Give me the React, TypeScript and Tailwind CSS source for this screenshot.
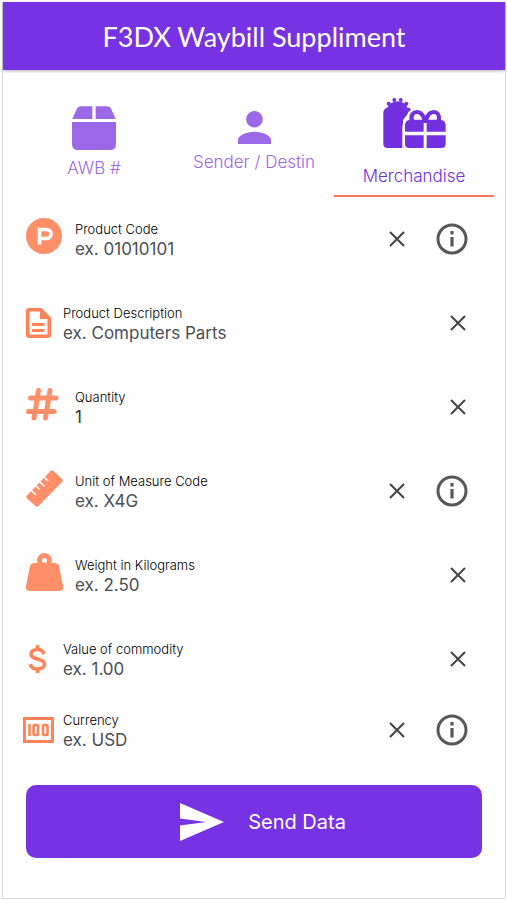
import { useState, type ReactNode } from "react";

function PackageIcon() {
  return (
    <svg className="h-11 w-11" viewBox="0 0 132 132" fill="currentColor" aria-hidden="true">
      <path d="M28 1h33v38H1L14 10Q18 1 28 1Z" />
      <path d="M71 1h33q10 0 14 9l13 29H71Z" />
      <path d="M0 48h132v66q0 18-18 18H18q-18 0-18-18Z" />
    </svg>
  );
}

function PersonIcon() {
  return (
    <svg className="h-[33px] w-[33px]" viewBox="4 4 16 16" fill="currentColor" aria-hidden="true">
      <path d="M12 12c2.21 0 4-1.79 4-4s-1.79-4-4-4-4 1.790-4 4 1.790 4 4 4zm0 2c-2.670 0-8 1.340-8 4v2h16v-2c0-2.660-5.330-4-8-4z" />
    </svg>
  );
}

function GiftsIcon() {
  return (
    <svg className="h-[52px] w-16" viewBox="187 37 192 156" aria-hidden="true">
      <g fill="currentColor">
        <path d="M204 65q6-16 30-18 24 2 30 20 5 10-2 20l-12 16v84h-46q-13 0-13-13V81q0-10 13-16Z" />
        <circle cx="207" cy="54" r="6" />
        <circle cx="224" cy="43" r="6" />
        <circle cx="243" cy="43" r="6" />
        <circle cx="260" cy="54" r="6" />
        <circle cx="267" cy="72" r="6" />
      </g>
      <path
        d="M248 192v-68q0-18 16-25 0-31 28-32 17 0 25 13 8-13 25-13 26 1 28 32"
        fill="white"
      />
      <g fill="currentColor">
        <path d="M256 138v-19q0-14 13-16 -2-29 23-30 17 0 25 18 8-18 25-18 24 1 22 30 14 2 14 16v19h-57v-26h-9v26Z" />
        <path d="M256 149h56v38h-43q-13 0-13-13ZM321 149h57v25q0 13-13 13h-44Z" />
      </g>
      <g fill="white">
        <path d="M283 102q-4-15 8-17 12 0 17 17Z" />
        <path d="M351 102q4-15-8-17-12 0-17 17Z" />
      </g>
    </svg>
  );
}

function CodeIcon() {
  return (
    <svg className="h-[37px] w-[37px]" viewBox="0 0 37 37" aria-hidden="true">
      <circle cx="18" cy="18" r="18" fill="currentColor" />
      <path
        d="M13.500 26.500V11.500h7a4.500 4.500 0 0 1 0 9h-6.500"
        fill="none"
        stroke="white"
        strokeWidth="3.600"
      />
    </svg>
  );
}

function DocumentIcon() {
  return (
    <svg className="h-8 w-[25px]" viewBox="0 0 25 32" aria-hidden="true">
      <path
        fill="currentColor"
        fillRule="evenodd"
        d="M3 1h12.500L25 10.500V28q0 3-3 3H3q-3 0-3-3V4q0-3 3-3Zm.500 3.500v23h18V12H14V4.500Z"
      />
      <path d="M6 17.500h12.500M6 23.500h12.500" stroke="currentColor" strokeWidth="3" />
    </svg>
  );
}

function HashIcon() {
  return (
    <svg className="h-[33px] w-[37px]" viewBox="0 0 37 33" aria-hidden="true">
      <path
        d="M12.500 2.500 8 30M24 2.500 19.500 30M4.500 10H30M2.500 23.500H28"
        fill="none"
        stroke="currentColor"
        strokeWidth="5"
        strokeLinecap="round"
      />
    </svg>
  );
}

function RulerIcon() {
  return (
    <svg className="h-[37px] w-[37px]" viewBox="0 0 37 37" aria-hidden="true">
      <path
        d="M1 25.500 24.500 1q1.500-1.500 3 0L36 9q1.500 1.500 0 3L12.500 36q-1.500 1.500-3 0L1 28.500q-1.500-1.500 0-3Z"
        fill="currentColor"
      />
      <path
        d="m5.500 20.500 4.500 4.500M10 16l3.500 3.500M14 12l4.500 4.500M18.500 7.500 22 11"
        stroke="white"
        strokeWidth="1.700"
      />
    </svg>
  );
}

function WeightIcon() {
  return (
    <svg className="h-[38px] w-[37px]" viewBox="0 0 37 38" aria-hidden="true">
      <path
        d="M8 10h21q3 0 4 3l4 20q1 5-4 5H4q-5 0-4-5l4-20q1-3 4-3Z"
        fill="currentColor"
      />
      <circle cx="18.500" cy="7.500" r="5" fill="white" stroke="currentColor" strokeWidth="5" />
    </svg>
  );
}

function DollarIcon() {
  return (
    <svg className="h-[30px] w-[25px]" viewBox="0 0 25 30" aria-hidden="true">
      <path
        d="M11.500 1v4M11.500 25v4M18 10c-1-3-3.500-4.500-6.500-4.500-4 0-6.500 2-6.500 4.500 0 3 3 4.200 6.500 5s7 2 7 5c0 3-3 5-7 5-3.500 0-6.500-1.700-7.300-4.800"
        fill="none"
        stroke="currentColor"
        strokeWidth="3.600"
      />
    </svg>
  );
}

function BanknoteIcon() {
  return (
    <svg
      className="h-[26px] w-[31px] shrink-0"
      viewBox="0 0 31 26"
      fill="none"
      stroke="currentColor"
      aria-hidden="true"
    >
      <path d="M1.500 1.500h28v23h-28Z" strokeWidth="3" />
      <path d="M6.500 7v12" strokeWidth="2.500" />
      <rect x="10.500" y="8" width="4.500" height="10" rx="1" strokeWidth="2.500" />
      <rect x="20" y="8" width="4.500" height="10" rx="1" strokeWidth="2.500" />
    </svg>
  );
}

function SendIcon() {
  return (
    <svg className="h-[38px] w-11" viewBox="0 0 44 38" fill="currentColor" aria-hidden="true">
      <path d="M0 0 44 19 0 38V22.500L26 19 0 15.500Z" />
    </svg>
  );
}

function ClearButton({ label, onClick }: { label: string; onClick: () => void }) {
  return (
    <button
      type="button"
      aria-label={`Clear ${label}`}
      onClick={onClick}
      className="flex h-5 w-5 items-center justify-center text-[#444444]"
    >
      <svg className="h-4 w-4" viewBox="0 0 16 16" aria-hidden="true">
        <path d="m1 1 14 14M15 1 1 15" stroke="currentColor" strokeWidth="2" />
      </svg>
    </button>
  );
}

function InfoButton({ label }: { label: string }) {
  return (
    <button type="button" aria-label={`About ${label}`} className="h-8 w-8 text-[#585858]">
      <svg viewBox="0 0 32 32" aria-hidden="true">
        <circle cx="16" cy="16" r="14" fill="none" stroke="currentColor" strokeWidth="3" />
        <path d="M14.400 8h3.200v3.500h-3.200ZM14.400 14h3.200v9.500h-3.200Z" fill="currentColor" />
      </svg>
    </button>
  );
}

interface Field {
  id: string;
  label: string;
  placeholder: string;
  initial?: string;
  icon: ReactNode;
  wide?: boolean;
  info?: boolean;
}

const fields: Field[] = [
  { id: "code", label: "Product Code", placeholder: "ex. 01010101", icon: <CodeIcon />, wide: true, info: true },
  { id: "description", label: "Product Description", placeholder: "ex. Computers Parts", icon: <DocumentIcon /> },
  { id: "quantity", label: "Quantity", placeholder: "ex. 1", initial: "1", icon: <HashIcon />, wide: true },
  { id: "unit", label: "Unit of Measure Code", placeholder: "ex. X4G", icon: <RulerIcon />, wide: true, info: true },
  { id: "weight", label: "Weight in Kilograms", placeholder: "ex. 2.50", icon: <WeightIcon />, wide: true },
  { id: "value", label: "Value of commodity", placeholder: "ex. 1.00", icon: <DollarIcon /> },
  { id: "currency", label: "Currency", placeholder: "ex. USD", icon: <BanknoteIcon />, info: true },
];

function FieldRow({ field }: { field: Field }) {
  const [value, setValue] = useState(field.initial ?? "");
  return (
    <div className="flex h-[84px] items-center pr-[14px] last:h-[58px]">
      <div
        className={
          field.wide
            ? "mr-3 flex w-[37px] shrink-0 justify-center pb-[6px] text-[#ff8f68]"
            : "mr-3 flex w-[25px] shrink-0 justify-center text-[#ff8356]"
        }
      >
        {field.icon}
      </div>
      <div className="flex min-w-0 flex-1 flex-col">
        <label htmlFor={field.id} className="text-[13px] leading-5 font-light text-black">
          {field.label}
        </label>
        <input
          id={field.id}
          value={value}
          placeholder={field.placeholder}
          onChange={(event) => setValue(event.target.value)}
          className="h-5 w-full bg-transparent text-[17px] leading-5 text-[#333333] outline-none placeholder:text-[#4a5056]"
        />
      </div>
      <div className="flex items-center gap-[29px]">
        <ClearButton label={field.label} onClick={() => setValue("")} />
        {field.info && <InfoButton label={field.label} />}
      </div>
    </div>
  );
}

const tabs = [
  { label: "AWB #", icon: <PackageIcon />, gap: "gap-[6px]" },
  { label: "Sender / Destin", icon: <PersonIcon />, gap: "gap-[6px]" },
  { label: "Merchandise", icon: <GiftsIcon />, gap: "gap-[14px]" },
];

export default function App() {
  const [active, setActive] = useState(2);
  return (
    <div className="min-h-screen bg-white pt-[2px] pr-px pb-px pl-[2px] font-['Inter',sans-serif]">
      <main className="min-h-[897px] border border-t-0 border-[#dadada] bg-[#fefefe]">
        <header className="flex h-[68px] items-center justify-center bg-[#7733e3] pt-[2px] shadow-[0_1px_3px_rgba(0,0,0,0.3)]">
          <h1 className="font-['Lato',sans-serif] text-[27px] leading-9 text-white">
            F3DX Waybill Suppliment
          </h1>
        </header>
        <div role="tablist" className="grid h-[127px] grid-cols-3 px-[11px]">
          {tabs.map((tab, index) => (
            <button
              key={tab.label}
              type="button"
              role="tab"
              aria-selected={index === active}
              onClick={() => setActive(index)}
              className={`flex flex-col items-center justify-center border-b-2 pt-5 text-[17px] leading-6 font-light ${tab.gap} ${
                index === active
                  ? "border-[#ee7756] text-[#7230e0]"
                  : "border-transparent text-[#9c68ea]"
              }`}
            >
              {tab.icon}
              {tab.label}
            </button>
          ))}
        </div>
        <form className="px-[23px] pb-10" onSubmit={(event) => event.preventDefault()}>
          <div>
            {fields.map((field) => (
              <FieldRow key={field.id} field={field} />
            ))}
          </div>
          <button
            type="submit"
            className="mt-[26px] flex h-[73px] w-full items-center justify-center gap-6 rounded-[10px] bg-[#7733e3] pl-[18px] text-xl text-white"
          >
            <SendIcon />
            Send Data
          </button>
        </form>
      </main>
    </div>
  );
}
